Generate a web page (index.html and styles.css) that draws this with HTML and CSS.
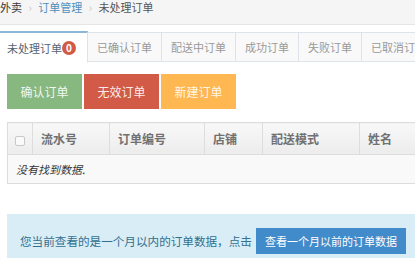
FILE: index.html
```html
<!DOCTYPE html>
<html lang="zh-CN">
<head>
  <meta charset="UTF-8">
  <title>未处理订单</title>
  <link rel="stylesheet" href="styles.css">
</head>
<body>
  <div class="breadcrumb">
    <span>外卖</span>
    <span class="sep">›</span>
    <a href="#">订单管理</a>
    <span class="sep">›</span>
    <span class="current">未处理订单</span>
  </div>

  <div class="page">
    <ul class="tabs">
      <li class="tab active">未处理订单<span class="badge">0</span></li>
      <li class="tab">已确认订单</li>
      <li class="tab">配送中订单</li>
      <li class="tab">成功订单</li>
      <li class="tab">失败订单</li>
      <li class="tab">已取消订单</li>
    </ul>

    <div class="toolbar">
      <button class="btn btn-success">确认订单</button>
      <button class="btn btn-danger">无效订单</button>
      <button class="btn btn-warning">新建订单</button>
    </div>

    <table class="grid">
      <thead>
        <tr>
          <th class="col-check"><span class="checkbox"></span></th>
          <th class="col-serial">流水号</th>
          <th class="col-order">订单编号</th>
          <th class="col-shop">店铺</th>
          <th class="col-mode">配送模式</th>
          <th>姓名</th>
        </tr>
      </thead>
      <tbody>
        <tr>
          <td colspan="6" class="empty">没有找到数据.</td>
        </tr>
      </tbody>
    </table>

    <div class="alert">
      您当前查看的是一个月以内的订单数据，点击
      <button class="btn-primary">查看一个月以前的订单数据</button>
    </div>
  </div>
</body>
</html>
```

FILE: styles.css
```css
body {
  margin: 0;
  font-family: "Noto Sans CJK SC", "Liberation Sans", sans-serif;
  color: #393939;
  background-color: #fff;
  overflow: hidden;
}

.breadcrumb {
  height: 24px;
  line-height: 14px;
  font-size: 11px;
  background-color: #f5f5f5;
  border-bottom: 1px solid #e5e5e5;
  white-space: nowrap;
}

.breadcrumb a {
  color: #4c8fbd;
  text-decoration: none;
}

.breadcrumb .sep {
  color: #c5c5c5;
  margin: 0 4px;
}

.breadcrumb .current {
  color: #555;
}

.page {
  padding-top: 6px;
}

.tabs {
  display: flex;
  list-style: none;
  margin: 0;
  padding: 0;
  border-bottom: 1px solid #dde3ea;
  height: 30px;
}

.tab {
  height: 28px;
  line-height: 28px;
  margin-top: 1px;
  padding: 0 9px;
  font-size: 11px;
  color: #999;
  background-color: #f9f9f9;
  border: 1px solid #dde3ea;
  border-left: none;
  white-space: nowrap;
}

.tab.active {
  height: 29px;
  margin-top: 0;
  padding: 0 11px 0 7px;
  color: #576373;
  background-color: #fff;
  border-top: 2px solid #8db5d6;
  border-bottom-color: #fff;
  display: flex;
  align-items: center;
}

.badge {
  display: inline-block;
  width: 14px;
  height: 14px;
  line-height: 14px;
  border-radius: 50%;
  background-color: #d15b47;
  color: #fff;
  font-size: 10px;
  font-weight: bold;
  text-align: center;
}

.toolbar {
  display: flex;
  gap: 2px;
  padding: 12px 7px 0;
}

.btn {
  width: 75px;
  height: 35px;
  border: none;
  font-family: inherit;
  font-size: 12px;
  color: rgba(255, 255, 255, 0.9);
}

.btn-success {
  background-color: #87b87f;
}

.btn-danger {
  background-color: #d15b47;
}

.btn-warning {
  background-color: #ffb752;
}

.grid {
  margin: 13px 0 0 7px;
  width: 480px;
  border-collapse: collapse;
  border: 1px solid #ddd;
  font-size: 12px;
}

.grid th {
  height: 31px;
  padding: 0 8px;
  text-align: left;
  color: #707070;
  font-weight: bold;
  background: linear-gradient(#f8f8f8, #ececec);
  border: 1px solid #ddd;
}

.col-check {
  width: 25px;
  box-sizing: border-box;
  padding: 0 !important;
  text-align: center !important;
}

.col-serial {
  width: 60px;
}

.col-order {
  width: 78px;
}

.col-shop {
  width: 41px;
}

.col-mode {
  width: 80px;
}

.checkbox {
  display: inline-block;
  width: 8px;
  height: 8px;
  border: 1px solid #c8c8c8;
  border-radius: 2px;
  background-color: #fafafa;
  vertical-align: middle;
}

.empty {
  height: 28px;
  padding: 0 8px;
  font-style: italic;
  font-size: 11px;
  color: #333;
  background-color: #f9f9f9;
}

.alert {
  margin: 30px 0 0 7px;
  padding: 14px 0 14px 13px;
  height: 40px;
  background-color: #d9edf7;
  color: #31708f;
  font-size: 11.6px;
  white-space: nowrap;
  display: flex;
  align-items: flex-start;
  line-height: 26px;
}

.btn-primary {
  height: 26px;
  margin-left: 4px;
  padding: 0 9px;
  border: none;
  background-color: #428bca;
  color: #fff;
  font-family: inherit;
  font-size: 11px;
}
```
